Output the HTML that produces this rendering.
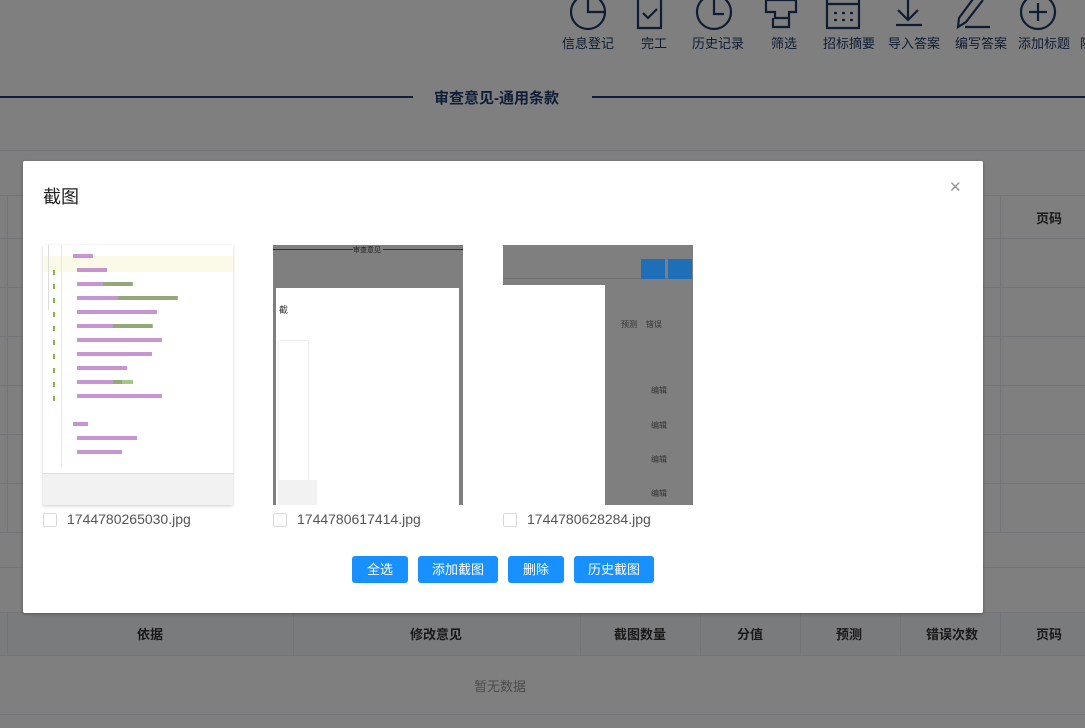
<!DOCTYPE html>
<html><head><meta charset="utf-8"><style>
*{margin:0;padding:0;box-sizing:border-box}
body{width:1085px;height:728px;overflow:hidden;background:#fff;font-family:"Liberation Sans","Noto Sans CJK SC",sans-serif;position:relative}
.abs{position:absolute}
.hl{position:absolute;left:0;right:0;height:1px;background:#e6e9ee}
.vl{position:absolute;width:1px;background:#e6e9ee}
.tb{position:absolute;top:33px;font-size:13px;color:#1e3a66;text-align:center;width:70px}
.th{position:absolute;font-size:13px;font-weight:bold;color:#333;text-align:center}
#mask{position:absolute;left:0;top:0;width:1085px;height:728px;background:rgba(0,0,0,.5)}
.modal{position:absolute;left:23px;top:161px;width:960px;height:452px;background:#fff;border-radius:2px;box-shadow:0 1px 3px rgba(0,0,0,.3)}
.btn{position:absolute;top:395px;height:27px;background:#1890ff;color:#fff;font-size:13px;line-height:27px;text-align:center;border-radius:3px}
.cb{position:absolute;top:352px;width:14px;height:14px;border:1px solid #d9d9d9;border-radius:2px;background:#fff}
.lab{position:absolute;top:350px;font-size:14px;color:#555}
.th1{position:absolute;top:84px;width:190px;height:260px;overflow:hidden}
</style></head><body>
<svg class="abs" style="left:560px;top:0" width="525" height="32" fill="none" stroke="#1e3a66" stroke-width="2.2">
<circle cx="28" cy="12" r="17"/><path d="M28 -5V12H45"/>
<path d="M78 -5V28H101V-5M83 13l5 5 9-9"/>
<circle cx="154" cy="12" r="17"/><path d="M154 0V14H164"/>
<path d="M206 0H236V12H229V18H215V12H206Z M213 18V27H229V18"/>
<path d="M267 -2V28H299V-2Z M267 4H299"/><path d="M274 13h3M282 13h3M290 13h3M274 20h3M282 20h3M290 20h3"/>
<path d="M348 -5V20M338 10l10 10 10-10M336 25H362"/>
<path d="M416 -5L399 18l-1 9 8-5 17-22M405 27H430"/>
<circle cx="478" cy="12" r="17"/><path d="M478 3V21M469 12H487"/>
</svg>
<div class="tb" style="left:553px">信息登记</div>
<div class="tb" style="left:619px">完工</div>
<div class="tb" style="left:683px">历史记录</div>
<div class="tb" style="left:749px">筛选</div>
<div class="tb" style="left:814px">招标摘要</div>
<div class="tb" style="left:879px">导入答案</div>
<div class="tb" style="left:946px">编写答案</div>
<div class="tb" style="left:1009px">添加标题</div>
<div class="abs" style="left:1080px;top:33px;font-size:13px;color:#1e3a66">隐</div>
<div class="abs" style="left:0;top:96px;width:413px;height:1.5px;background:#1e3d7a"></div>
<div class="abs" style="left:592px;top:96px;width:493px;height:1.5px;background:#1e3d7a"></div>
<div class="abs" style="left:434px;top:87px;font-size:15px;font-weight:bold;color:#1e3d6e">审查意见-通用条款</div>
<div class="hl" style="top:150px"></div><div class="hl" style="top:195px"></div><div class="hl" style="top:238px"></div>
<div class="hl" style="top:287px"></div><div class="hl" style="top:336px"></div><div class="hl" style="top:385px"></div>
<div class="hl" style="top:434px"></div><div class="hl" style="top:483px"></div><div class="hl" style="top:532px"></div>
<div class="hl" style="top:567px"></div><div class="hl" style="top:612px"></div><div class="hl" style="top:655px"></div><div class="hl" style="top:714px"></div>
<div class="vl" style="left:7px;top:195px;height:337px"></div><div class="vl" style="left:1000px;top:195px;height:337px"></div>
<div class="th" style="left:1036px;top:208px">页码</div>
<div class="abs" style="left:0;top:612px;width:1085px;height:43px;background:#f5f7fa"></div>
<div class="vl" style="left:7px;top:612px;height:43px"></div><div class="vl" style="left:293px;top:612px;height:43px"></div>
<div class="vl" style="left:580px;top:612px;height:43px"></div><div class="vl" style="left:700px;top:612px;height:43px"></div>
<div class="vl" style="left:800px;top:612px;height:43px"></div><div class="vl" style="left:900px;top:612px;height:43px"></div><div class="vl" style="left:1000px;top:612px;height:43px"></div>
<div class="hl" style="top:612px"></div><div class="hl" style="top:655px"></div>
<div class="th" style="left:137px;top:624px">依据</div>
<div class="th" style="left:410px;top:624px">修改意见</div>
<div class="th" style="left:614px;top:624px">截图数量</div>
<div class="th" style="left:737px;top:624px">分值</div>
<div class="th" style="left:836px;top:624px">预测</div>
<div class="th" style="left:926px;top:624px">错误次数</div>
<div class="th" style="left:1036px;top:624px">页码</div>
<div class="abs" style="left:474px;top:676px;font-size:13px;color:#999">暂无数据</div>
<div id="mask"></div>
<div class="modal">
<div class="abs" style="left:20px;top:22px;font-size:18px;color:#222">截图</div>
<div class="abs" style="left:926px;top:17px;font-size:15px;color:#999">✕</div>
<div class="th1" style="left:20px;background:#fff;box-shadow:0 1px 3px rgba(0,0,0,.2)">
<div class="abs" style="left:0;top:11px;width:190px;height:16px;background:#fbf9e8"></div>
<div class="abs" style="left:5px;top:0;width:1px;height:65px;background:#ddd"></div>
<div class="abs" style="left:18px;top:0;width:1px;height:222px;background:#e8e8e8"></div>
<svg class="abs" style="left:0;top:0" width="190" height="230">
<g fill="#8ab347"><rect x="10" y="25" width="2" height="5"/><rect x="10" y="39" width="2" height="5"/><rect x="10" y="53" width="2" height="5"/><rect x="10" y="67" width="2" height="5"/><rect x="10" y="81" width="2" height="5"/><rect x="10" y="95" width="2" height="5"/><rect x="10" y="109" width="2" height="5"/><rect x="10" y="123" width="2" height="5"/><rect x="10" y="137" width="2" height="5"/><rect x="10" y="151" width="2" height="5"/></g>
<g fill="#b06ac0" opacity=".7"><rect x="30" y="9" width="20" height="4"/><rect x="34" y="23" width="30" height="4"/><rect x="34" y="37" width="55" height="4"/><rect x="34" y="51" width="100" height="4"/><rect x="34" y="65" width="80" height="4"/><rect x="34" y="79" width="75" height="4"/><rect x="34" y="93" width="85" height="4"/><rect x="34" y="107" width="75" height="4"/><rect x="34" y="121" width="50" height="4"/><rect x="34" y="135" width="45" height="4"/><rect x="34" y="149" width="85" height="4"/><rect x="30" y="177" width="15" height="4"/><rect x="34" y="191" width="60" height="4"/><rect x="34" y="205" width="45" height="4"/></g>
<g fill="#7db050" opacity=".7"><rect x="60" y="37" width="30" height="4"/><rect x="75" y="51" width="60" height="4"/><rect x="70" y="79" width="40" height="4"/><rect x="70" y="135" width="20" height="4"/></g>
</svg>
<div class="abs" style="left:0;top:228px;width:190px;height:32px;background:#f2f2f2;border-top:1px solid #ddd"></div>
</div>
<div class="th1" style="left:250px;background:#7f7f7f">
<div class="abs" style="left:0;top:4px;width:190px;height:1px;background:#333"></div>
<div class="abs" style="left:80px;top:0;width:30px;height:8px;background:#7f7f7f;font-size:7px;color:#222">审查意见</div>
<div class="abs" style="left:3px;top:43px;width:183px;height:217px;background:#fff"></div>
<div class="abs" style="left:6px;top:58px;font-size:9px;color:#333">截</div>
<div class="abs" style="left:6px;top:96px;width:29px;height:165px;background:#fff;box-shadow:0 0 2px rgba(0,0,0,.2)"></div>
<div class="abs" style="left:6px;top:235px;width:38px;height:25px;background:#f2f2f2"></div>
</div>
<div class="th1" style="left:480px;background:#7f7f7f">
<div class="abs" style="left:0;top:33px;width:190px;height:1px;background:#707070"></div>
<div class="abs" style="left:138px;top:14px;width:24px;height:20px;background:#1e6fb8"></div>
<div class="abs" style="left:165px;top:14px;width:24px;height:20px;background:#1e6fb8"></div>
<div class="abs" style="left:0;top:40px;width:102px;height:220px;background:#fff"></div>
<div class="abs" style="left:118px;top:74px;font-size:8px;color:#333">预测 &nbsp;&nbsp; 错误</div>
<div class="abs" style="left:148px;top:140px;font-size:8px;color:#333">编辑</div>
<div class="abs" style="left:148px;top:175px;font-size:8px;color:#333">编辑</div>
<div class="abs" style="left:148px;top:209px;font-size:8px;color:#333">编辑</div>
<div class="abs" style="left:148px;top:243px;font-size:8px;color:#333">编辑</div>
</div>
<div class="cb" style="left:20px"></div><div class="lab" style="left:44px">1744780265030.jpg</div>
<div class="cb" style="left:250px"></div><div class="lab" style="left:274px">1744780617414.jpg</div>
<div class="cb" style="left:480px"></div><div class="lab" style="left:504px">1744780628284.jpg</div>
<div class="btn" style="left:329px;width:56px">全选</div>
<div class="btn" style="left:395px;width:80px">添加截图</div>
<div class="btn" style="left:485px;width:56px">删除</div>
<div class="btn" style="left:551px;width:80px">历史截图</div>
</div>
</body></html>
